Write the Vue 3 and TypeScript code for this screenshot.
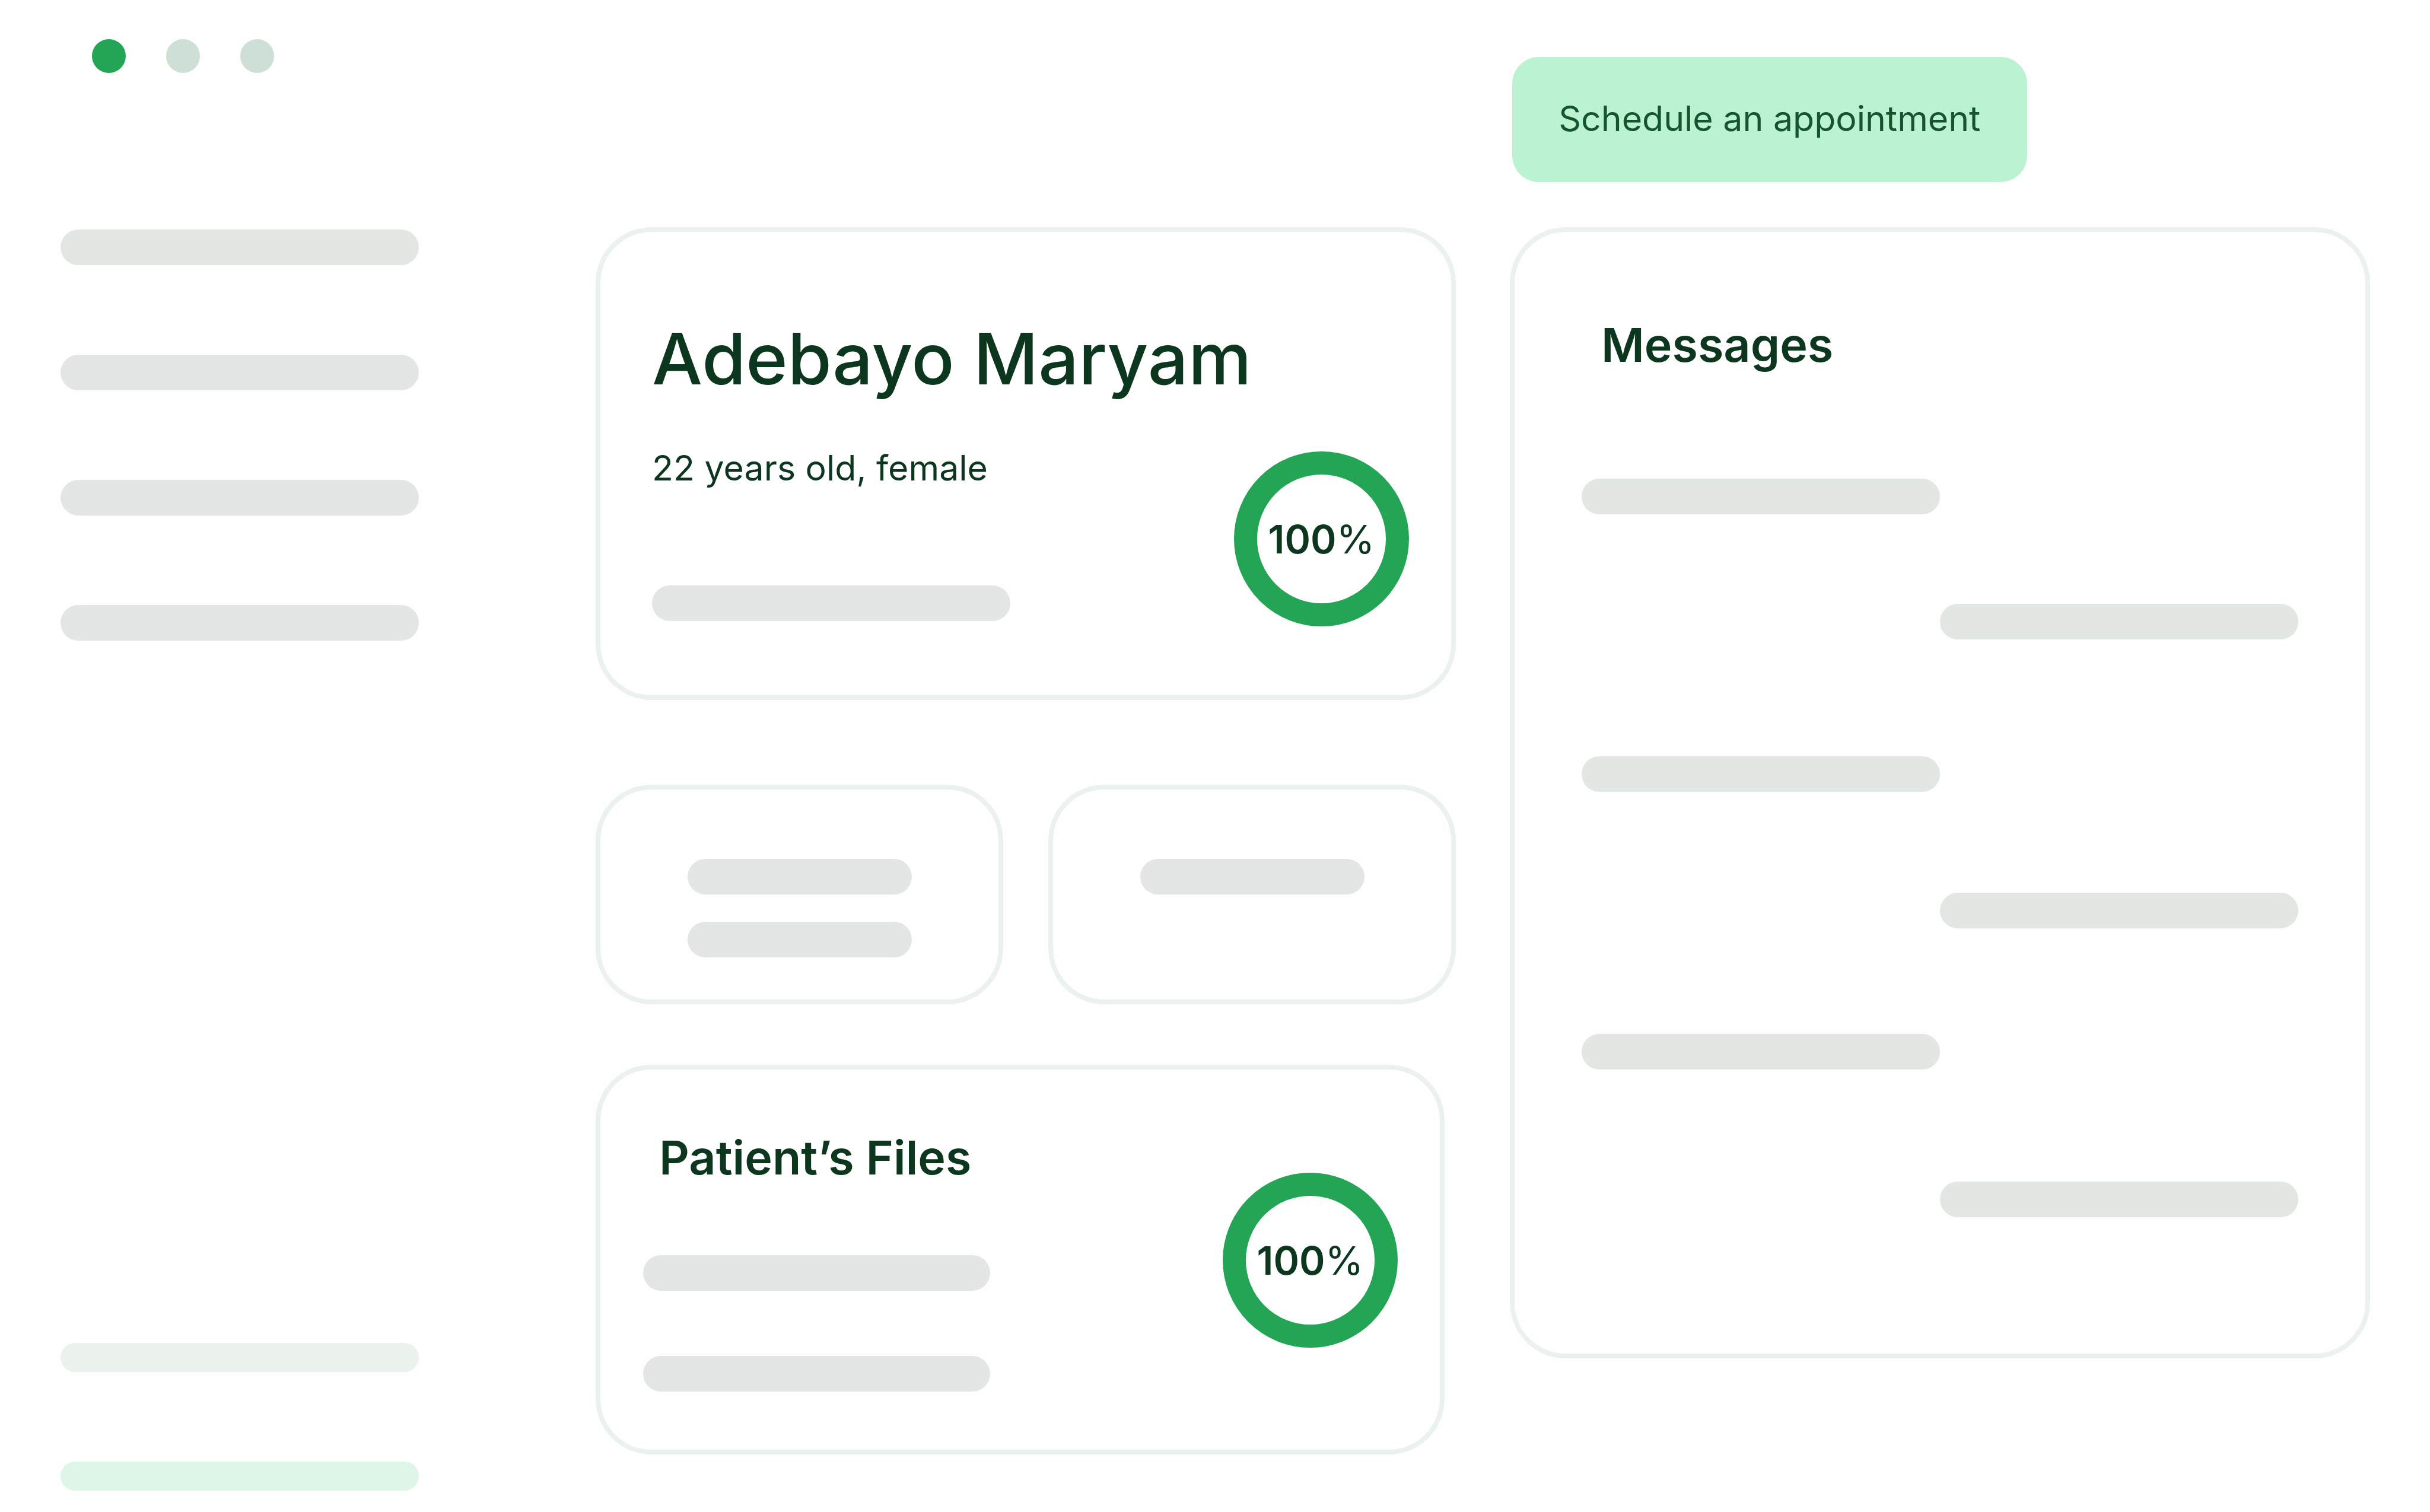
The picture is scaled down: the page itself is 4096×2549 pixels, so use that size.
<script setup lang="ts">
interface Message {
  id: number
  side: 'received' | 'sent'
  spacing: string
}

const navItems: string[] = ['tinted', 'plain', 'plain', 'plain']
const footerItems: string[] = ['pale', 'mint']

const messages: Message[] = [
  { id: 1, side: 'received', spacing: 'medium' },
  { id: 2, side: 'sent', spacing: 'near' },
  { id: 3, side: 'received', spacing: 'far' },
  { id: 4, side: 'sent', spacing: 'close' },
  { id: 5, side: 'received', spacing: 'medium' },
  { id: 6, side: 'sent', spacing: 'wide' },
]
</script>

<template>
  <div class="page">
    <header class="top">
      <div class="dots">
        <span class="dot active"></span>
        <span class="dot"></span>
        <span class="dot"></span>
      </div>
      <div class="actions">
        <button type="button" class="schedule">Schedule an appointment</button>
      </div>
    </header>

    <div class="body">
      <nav class="sidebar">
        <div class="stack">
          <span v-for="(tone, i) in navItems" :key="i" class="bar" :class="tone"></span>
        </div>
        <div class="stack">
          <span v-for="tone in footerItems" :key="tone" class="bar slim" :class="tone"></span>
        </div>
      </nav>

      <main class="main">
        <section class="card patient">
          <h1>Adebayo Maryam</h1>
          <div class="row">
            <div class="details">
              <p>22 years old, female</p>
              <span class="bar plain"></span>
            </div>
            <div class="ring"><b>100</b>%</div>
          </div>
        </section>

        <div class="tiles">
          <section class="card tile">
            <span class="bar plain"></span>
            <span class="bar plain"></span>
          </section>
          <section class="card tile">
            <span class="bar plain"></span>
          </section>
        </div>

        <section class="card files">
          <div class="file-list">
            <h2>Patient’s Files</h2>
            <span class="bar plain"></span>
            <span class="bar plain"></span>
          </div>
          <div class="ring"><b>100</b>%</div>
        </section>
      </main>

      <section class="card messages">
        <h2>Messages</h2>
        <div class="thread">
          <span
            v-for="m in messages"
            :key="m.id"
            class="bar tinted"
            :class="[m.side, m.spacing]"
          ></span>
        </div>
      </section>
    </div>
  </div>
</template>

<style>
body {
  margin: 0;
  background: #fefefe;
}
</style>

<style scoped>
.page {
  box-sizing: border-box;
  display: flex;
  flex-direction: column;
  min-height: 100vh;
  padding: 0 101px 0 102px;
  color: #0c361d;
  font-family: Inter, "Liberation Sans", sans-serif;
}

h1,
h2,
p {
  margin: 0;
}

.top,
.body {
  display: grid;
  grid-template-columns: 811fr 1450fr 1450fr;
  column-gap: 91px;
}

.top {
  align-items: start;
  padding-bottom: 76px;
}

.dots {
  display: flex;
  gap: 68px;
  padding: 66px 0 0 53px;
}

.dot {
  width: 57px;
  height: 57px;
  border-radius: 50%;
  background: #cedfd6;
}

.dot.active {
  background: #24a556;
}

.actions {
  grid-column: 3;
  padding: 96px 0 0 4px;
}

.schedule {
  display: block;
  box-sizing: border-box;
  width: 60%;
  padding: 68px 0 71px;
  border: 0;
  border-radius: 45px;
  background: #bbf2d2;
  color: #15552e;
  font-family: inherit;
  font-size: 59px;
  line-height: 72px;
  white-space: nowrap;
}

.body {
  flex: 1;
  align-items: start;
}

.bar {
  display: block;
  height: 60px;
  border-radius: 30px;
}

.bar.slim {
  height: 49px;
}

.plain {
  background: #e4e6e5;
}

.tinted {
  background: #e2e7e3;
}

.pale {
  background: #ebf1ed;
}

.mint {
  background: #ddf6e7;
}

.sidebar {
  display: flex;
  flex-direction: column;
  justify-content: space-between;
  align-self: stretch;
  max-width: 604px;
  padding: 4px 0 36px;
}

.stack {
  display: flex;
  flex-direction: column;
  gap: 151px;
}

.card {
  box-sizing: border-box;
  border: 8px solid #ebf1ee;
  border-radius: 94px;
}

h1 {
  font-size: 120px;
  font-weight: 500;
  line-height: 140px;
}

h2 {
  font-size: 79px;
  font-weight: 600;
  line-height: 96px;
}

.patient {
  padding: 144px 71px 116px 87px;
}

.row {
  display: flex;
  justify-content: space-between;
  align-items: flex-start;
  margin-top: 78px;
}

.details {
  width: 604px;
}

.details p {
  margin-bottom: 162px;
  font-size: 59px;
  line-height: 72px;
  white-space: nowrap;
}

.ring {
  box-sizing: border-box;
  display: flex;
  justify-content: center;
  align-items: center;
  width: 295px;
  height: 295px;
  border: 39px solid #24a556;
  border-radius: 50%;
  font-size: 66px;
  line-height: 80px;
}

.ring b {
  font-weight: 600;
}

.row .ring {
  margin-top: 8px;
}

.tiles {
  display: grid;
  grid-template-columns: 1fr 1fr;
  gap: 76px;
  margin: 143px 0 102px;
}

.tile {
  display: flex;
  flex-direction: column;
  align-items: center;
  gap: 46px;
  padding: 117px 0 71px;
}

.tile .bar {
  width: 378px;
}

.files {
  display: flex;
  justify-content: space-between;
  align-items: flex-start;
  margin-right: 19px;
  padding: 100px 71px 98px 72px;
}

.file-list {
  display: flex;
  flex-direction: column;
  gap: 110px;
  width: 585px;
}

.file-list h2 {
  padding: 0 0 7px 27px;
  white-space: nowrap;
}

.files .ring {
  margin-top: 74px;
}

.messages {
  padding: 142px 113px 230px;
}

.messages h2 {
  padding-left: 33px;
}

.thread {
  display: flex;
  flex-direction: column;
}

.thread .bar {
  width: 50%;
}

.sent {
  align-self: flex-end;
}

.near {
  margin-top: 151px;
}

.close {
  margin-top: 170px;
}

.medium {
  margin-top: 178px;
}

.wide {
  margin-top: 189px;
}

.far {
  margin-top: 197px;
}
</style>
